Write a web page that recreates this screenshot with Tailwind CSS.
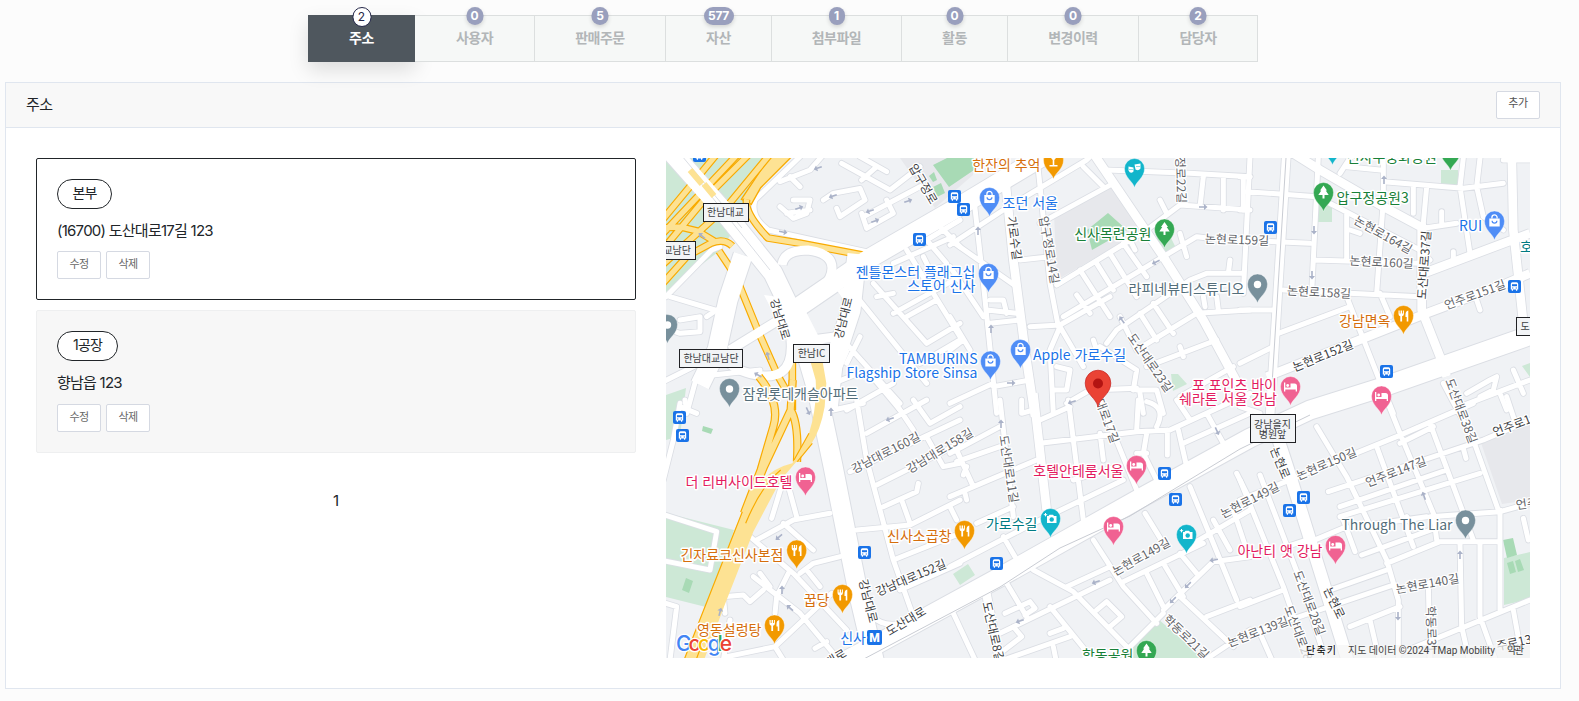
<!DOCTYPE html>
<html lang="ko">
<head>
<meta charset="utf-8">
<title>주소</title>
<script src="https://cdn.jsdelivr.net/npm/@tailwindcss/browser@4"></script>
</head>
<body class="bg-[#fcfcfc] w-[1579px] h-[701px] overflow-hidden font-[Inter,'Noto_Sans_CJK_KR',sans-serif] text-[#212529]">
<nav class="flex ml-[308px] pt-[15px] w-[950px] text-sm font-bold tracking-[-0.5px] text-[#b2b6b8] text-center leading-[46px]">
  <div class="relative w-[107px] h-[47px] bg-[#4f575e] text-white leading-[45px] shadow-[0_8px_20px_rgba(0,0,0,0.13)]">주소<span class="absolute left-1/2 -translate-x-1/2 -top-[8px] h-5 w-[19px] rounded-full bg-white border border-[#252849] text-[#252849] text-xs font-normal leading-[18px] tracking-normal">2</span></div>
  <div class="relative w-[120px] h-[47px] bg-[#f6f8f7] border-y border-r border-[#dcdfdf] leading-[43px]">사용자<span class="absolute left-1/2 -translate-x-1/2 -top-[9px] h-[18px] min-w-[17px] px-[4px] rounded-full bg-[#999fbd] text-white text-xs leading-[18px] tracking-normal shadow-[0_2px_4px_rgba(0,0,0,0.15)]">0</span></div>
  <div class="relative w-[131px] h-[47px] bg-[#f6f8f7] border-y border-r border-[#dcdfdf] leading-[43px]">판매주문<span class="absolute left-1/2 -translate-x-1/2 -top-[9px] h-[18px] min-w-[17px] px-[4px] rounded-full bg-[#999fbd] text-white text-xs leading-[18px] tracking-normal shadow-[0_2px_4px_rgba(0,0,0,0.15)]">5</span></div>
  <div class="relative w-[106px] h-[47px] bg-[#f6f8f7] border-y border-r border-[#dcdfdf] leading-[43px]">자산<span class="absolute left-1/2 -translate-x-1/2 -top-[9px] h-[18px] w-[30px] rounded-full bg-[#999fbd] text-white text-xs leading-[18px] tracking-[-0.3px] shadow-[0_2px_4px_rgba(0,0,0,0.15)]">577</span></div>
  <div class="relative w-[130px] h-[47px] bg-[#f6f8f7] border-y border-r border-[#dcdfdf] leading-[43px]">첨부파일<span class="absolute left-1/2 -translate-x-1/2 -top-[9px] h-[18px] min-w-[16px] px-[4px] rounded-full bg-[#999fbd] text-white text-xs leading-[18px] tracking-normal shadow-[0_2px_4px_rgba(0,0,0,0.15)]">1</span></div>
  <div class="relative w-[106px] h-[47px] bg-[#f6f8f7] border-y border-r border-[#dcdfdf] leading-[43px]">활동<span class="absolute left-1/2 -translate-x-1/2 -top-[9px] h-[18px] min-w-[17px] px-[4px] rounded-full bg-[#999fbd] text-white text-xs leading-[18px] tracking-normal shadow-[0_2px_4px_rgba(0,0,0,0.15)]">0</span></div>
  <div class="relative w-[131px] h-[47px] bg-[#f6f8f7] border-y border-r border-[#dcdfdf] leading-[43px]">변경이력<span class="absolute left-1/2 -translate-x-1/2 -top-[9px] h-[18px] min-w-[17px] px-[4px] rounded-full bg-[#999fbd] text-white text-xs leading-[18px] tracking-normal shadow-[0_2px_4px_rgba(0,0,0,0.15)]">0</span></div>
  <div class="relative w-[119px] h-[47px] bg-[#f6f8f7] border-y border-r border-[#dcdfdf] leading-[43px]">담당자<span class="absolute left-1/2 -translate-x-1/2 -top-[9px] h-[18px] min-w-[17px] px-[4px] rounded-full bg-[#999fbd] text-white text-xs leading-[18px] tracking-normal shadow-[0_2px_4px_rgba(0,0,0,0.15)]">2</span></div>
</nav>

<section class="mt-[20px] ml-[5px] w-[1556px] h-[607px] border border-[#e0e6ef] bg-white">
  <header class="flex items-center justify-between h-[45px] pl-[20px] pr-[20px] border-b border-[#e0e6ef] bg-[#f7f7f7]/90">
    <h1 class="text-[15px] leading-5 tracking-[-0.5px]">주소</h1>
    <button class="w-[44px] h-[28px] -mt-px rounded-[2px] border border-[#d5d9e2] bg-white text-[11px] leading-[22px] pb-1 tracking-[-0.4px] text-[#555]">추가</button>
  </header>
  <div class="flex gap-[30px] p-[30px]">
    <div class="w-[600px] flex flex-col">
      <article class="h-[142px] rounded-[2px] border border-[#212529] bg-white px-5 pt-5">
        <div class="w-[55px] h-[30px] rounded-full border border-[#212529] bg-white text-center text-sm leading-[26px] tracking-[-0.9px]">본부</div>
        <p class="mt-[11px] text-[15px] leading-[22px] tracking-[-0.75px]">(16700) 도산대로17길 123</p>
        <div class="flex gap-[5px] mt-[9px] text-[11px] leading-[24px] tracking-[-0.6px] text-[#666] text-center">
          <button class="w-[44px] h-[28px] pb-1 rounded-[2px] border border-[#d5d9e2] bg-white">수정</button><button class="w-[44px] h-[28px] pb-1 rounded-[2px] border border-[#d5d9e2] bg-white">삭제</button>
        </div>
      </article>
      <article class="mt-[10px] h-[143px] rounded-[2px] border border-[#eeeff0] bg-[#f7f7f7] px-5 pt-5">
        <div class="w-[61px] h-[30px] rounded-full border border-[#212529] bg-white text-center text-sm leading-[26px] tracking-[-0.9px]">1공장</div>
        <p class="mt-[11px] text-[15px] leading-[22px] tracking-[-0.75px]">향남읍 123</p>
        <div class="flex gap-[5px] mt-[10px] text-[11px] leading-[24px] tracking-[-0.6px] text-[#666] text-center">
          <button class="w-[44px] h-[28px] pb-1 rounded-[2px] border border-[#d5d9e2] bg-white">수정</button><button class="w-[44px] h-[28px] pb-1 rounded-[2px] border border-[#d5d9e2] bg-white">삭제</button>
        </div>
      </article>
      <div class="mt-[37px] text-center text-[15px] leading-[22px]">1</div>
    </div>

    <svg class="block w-[864px] h-[500px] shrink-0 font-['Noto_Sans_CJK_KR',sans-serif]" viewBox="666 158 864 500">
      <defs>
        <path id="pin" stroke="#fff" stroke-opacity=".6" stroke-width=".6" d="M0,0 C-1.5,-6 -10,-10 -10,-19 A10,10 0 1 1 10,-19 C10,-10 1.5,-6 0,0Z"/>
        <g id="food"><use href="#pin" fill="#f29900"/><path d="M-5,-24v3.5q0,2 1.8,2.2V-13h1.8v-5.3q1.8-.2 1.8-2.2V-24h-1v3h-.9v-3h-1.4v3h-.9v-3zM4.8,-24q-2.8.5-2.8,4v2.5h1.2V-13h1.6z" fill="#fff"/></g>
        <g id="bar"><use href="#pin" fill="#f29900"/><path d="M-5,-24H5L.8,-19v5H4v1.5H-4V-14H-.8v-5z" fill="#fff"/></g>
        <g id="shop"><use href="#pin" fill="#4f8df6"/><path d="M-5.2,-21.5H5.2V-13.5H-5.2z" fill="#fff"/><path d="M-2.6,-21.5v-1a2.6,2.6 0 0 1 5.2,0v1" fill="none" stroke="#fff" stroke-width="1.3"/><path d="M-2.4,-19.3a2.4,2.4 0 0 0 4.8,0" fill="none" stroke="#4f8df6" stroke-width="1.2"/></g>
        <g id="cam"><use href="#pin" fill="#12b5cb"/><path d="M-3.5,-21.500h1.500l1,-1.300h3.500l1,1.300h2.500v7h-9.500z" fill="#fff"/><path d="M-5,-24.500v3.400M-6.700,-22.800h3.400" stroke="#fff"/><circle cx="1.200" cy="-18" r="2.200" fill="#12b5cb"/></g>
        <g id="mask"><use href="#pin" fill="#12b5cb"/><path d="M-6,-21l5,1v4q-3,3-5,-1zM0,-23l6,-1v5q-2,3-5,1z" fill="#fff"/><path d="M-5,-18h1m1,0h1M2,-21h1m1,0h1" stroke="#12b5cb"/></g>
        <g id="tree"><use href="#pin" fill="#34a853"/><path d="M0,-26l3.5,5H2.2l3,4.5H1V-13H-1v-3.500H-5.200l3-4.500H-3.500z" fill="#fff"/></g>
        <g id="dot"><use href="#pin" fill="#78909c"/><circle cy="-18.500" r="3.700" fill="#fff"/></g>
        <g id="bed"><use href="#pin" fill="#f06292"/><path d="M-6.500,-23h1.300v5H0v-4h4q2.500,0 2.500,2.500V-14H5.200v-2H-5.200v2H-6.500z" fill="#fff"/><circle cx="-2.800" cy="-20" r="1.400" fill="#fff"/></g>
        <g id="bus"><rect x="-6.500" y="-6.500" width="13" height="13" rx="2" fill="#1a73e8"/><path d="M-3.700,-2.500q0,-1.700 1.700,-1.700h4q1.700,0 1.700,1.700V3H2.700V4.200H1.500V3H-1.500V4.200H-2.700V3H-3.700z" fill="#fff"/><path d="M-2.500,-2.300h5v2h-5z" fill="#1a73e8"/><path d="M-2.400,1.500h1.200m2.400,0h1.200" stroke="#1a73e8"/></g>
        <path id="arr" d="M0,-4.500 L3,-1 H.8 V4 H-.8 V-1 H-3z" fill="#aab2c8"/>

        <g id="minor" fill="none" stroke-linecap="round" stroke-linejoin="round">
          <g transform="translate(660 150) scale(.33333)"><path d="M420,20 L285,150 Q270,200 325,240 L370,250 L620,305 M360,95 L450,60 L485,20 M390,80 L420,110 M360,170 L400,205 L440,190 L450,150 L400,150 M380,190 L450,180 M490,150 L520,130 L600,115 L615,150 L540,200 L530,175 M545,40 L690,120 L780,50 M600,20 L680,65 M605,90 L650,50 M610,200 L780,110 M620,235 L700,190 L680,150 M605,190 L620,235 M900,210 L800,270 L860,340 M740,300 L900,560 M590,440 L800,700 M640,400 L800,580 L900,520 M700,340 L880,260 M700,490 L900,380 M650,440 L700,430 M540,560 L720,760 M780,640 L900,570 M600,560 L560,640 M830,220 L900,290 M790,320 L810,360 L850,350 M740,500 L830,450 M30,440 L165,480 M18,440 L155,300 L180,290 M30,540 L60,550 L120,545 L120,500 L60,510 M0,700 L160,620 M80,790 L110,680 L300,660 M170,480 L140,500 M520,700 L620,660 L720,780 M560,780 L700,700"/></g>
          <g transform="translate(660 400) scale(.33333)"><path d="M520,30 L610,10 M590,0 L620,180 L700,480 L760,650 M620,100 L800,0 M700,0 L760,90 M760,0 L810,70 L900,20 M570,215 L900,60 M650,255 L900,130 M670,320 L770,275 L775,250 M725,300 L750,370 M590,390 L750,375 L900,300 M700,480 L900,400 M720,570 L900,490 M800,110 L850,200 L900,190 M640,650 Q680,700 820,640 L900,620 M270,410 L400,520 L560,690 M290,420 L400,360 L510,340 M380,240 L410,350 M335,355 L370,240 M280,530 L420,640 L520,760 M195,640 L190,590 L250,585 L270,605 L310,570 M385,520 L350,590 L345,640 M420,520 L460,490 L540,470 M440,510 L480,560 M515,580 L345,740 L200,770 M345,740 L370,780 M210,660 L190,780 M465,745 L500,725 M370,370 L460,450 M300,520 L330,560 M0,340 L170,395 L150,510 L0,480 M0,605 L50,620 L30,780 M60,10 L40,120 L10,240 M60,20 L110,40 M75,0 L80,30"/></g>
          <g transform="translate(950 150) scale(.33333)"><path d="M70,130 L100,400 L140,790 M265,60 L300,400 L325,530 M0,285 L160,180 L410,30 L430,10 M270,220 L490,100 M0,270 L200,410 M210,330 L300,320 M320,405 L590,240 L690,165 L900,180 M340,500 L740,260 L780,265 M240,530 L330,525 L480,440 M470,580 L500,540 L720,390 L770,370 L880,370 M840,330 L835,370 M390,360 L480,500 M440,340 L490,420 M480,310 L560,440 M520,280 L590,380 M540,270 L555,300 M380,435 L420,490 M330,530 L400,650 M330,530 L300,600 L310,790 M450,590 L560,660 L550,720 M430,570 L440,600 M510,500 L560,600 M570,490 L620,570 M610,460 L670,550 M560,600 L740,490 L900,480 M760,440 L765,470 M800,440 L805,480 M590,650 L800,570 M690,740 L850,650 M690,590 L700,620 M560,720 L620,720 L640,790 M570,730 L580,790 M350,760 L420,720 L560,715 M690,250 L710,320 M630,150 L650,190 M110,480 L200,490 M120,520 L210,510 M120,450 L160,450 L170,490 M0,350 L100,500 M0,500 L60,600 M130,710 L240,690 M0,600 L40,570 M0,760 L130,700 M320,650 L360,660 L350,720 L310,720 M470,60 L720,70 L900,80 M760,80 L750,170 M820,80 L820,180 M880,80 L880,180 M400,50 L460,110"/></g>
          <g transform="translate(950 400) scale(.33333)"><path d="M150,0 L190,350 M355,0 L400,360 M270,130 L560,95 L660,90 L900,-20 M270,60 L360,20 M450,100 L460,180 M370,240 L500,200 M450,0 L560,270 M565,0 L560,90 M590,5 Q650,20 620,80 M652,90 L652,165 M685,90 L710,200 M590,100 L580,160 L620,240 M560,160 L590,160 M700,130 L900,40 M770,40 L820,130 M680,0 L720,60 M0,290 L260,180 M0,500 L250,370 L520,240 M0,160 L150,80 M15,140 L70,260 M20,185 L150,140 M40,225 L50,200 M50,300 L45,280 M80,370 L190,320 M0,320 L20,360 M160,410 L195,470 M215,0 L215,40 L250,30 M10,640 L80,790 M170,550 L230,650 M250,510 L370,575 L540,750 M350,560 L480,500 M430,420 L520,560 L620,670 M150,700 L480,540 M300,620 L430,780 M190,680 L215,710 L150,760 M160,780 L360,710 M520,545 L760,430 M640,640 L540,740 M640,630 L790,485 L900,470 M590,520 L640,620 M640,490 L700,590 M690,460 L740,520 M585,340 L640,430 M720,260 L860,600 M730,430 L900,330 M690,590 L850,740 M770,650 L900,600 M790,360 L840,450 M850,330 L890,450 M860,220 L900,300 M750,790 L900,690 M310,740 L320,790 M440,630 L470,605 L515,650 L480,680 M165,640 L240,605 L255,625 L225,645 M300,700 L340,685"/></g>
          <g transform="translate(1240 150) scale(.33333)"><path d="M0,80 L30,80 M0,180 L20,180 M20,125 L230,140 M30,20 L10,430 M235,20 L215,430 M250,150 L540,300 L570,330 M320,190 L320,330 M330,240 L360,250 M430,24 L430,150 L410,430 M430,95 L670,115 L790,100 M300,70 L330,24 M320,50 L420,60 M520,110 L520,190 M560,110 L550,220 M605,185 L605,220 M550,235 L650,220 M670,24 L660,110 L690,310 M720,24 L710,110 L730,200 L790,240 M790,30 L870,30 M0,270 L210,280 M220,330 L540,340 M130,420 L540,440 M0,480 L110,480 M115,550 L330,470 M320,440 L430,720 M420,430 L450,500 M640,305 L640,330 M710,450 L720,480 M680,730 L750,690 L770,680 L760,720 L720,740 M820,660 L850,730 M660,770 L870,690 M0,640 L100,590 M440,740 L460,790 M780,730 L800,780"/></g>
          <g transform="translate(1240 400) scale(.33333)"><path d="M440,0 L480,100 L580,340 L590,420 M570,70 L700,420 M570,350 L780,335 L870,310 M610,-50 L700,120 L775,330 M800,-10 L830,80 M230,80 L320,230 L440,480 L475,600 L475,790 M410,140 L520,440 M0,300 L150,240 L470,110 L700,10 M265,275 L340,250 L730,120 L870,60 M300,320 L620,210 M300,350 L720,220 M350,380 L560,350 M480,130 L580,80 M365,465 L600,380 M440,490 L600,425 L780,425 M780,330 L780,630 M660,430 L665,680 L690,790 M720,430 L720,650 L770,790 M270,570 L440,510 M0,710 L460,555 M330,680 L480,620 M390,660 L420,790 M480,760 L870,600 M820,630 L840,740 M565,550 L570,780 M0,620 L130,570 M60,225 L180,540 L260,790 M0,240 L130,560 L210,790 M200,430 L320,380 M140,440 L200,420 M670,145 L678,175 M850,355 L865,420 M310,360 L345,455 M60,700 L100,790 M500,350 L520,380 M0,20 L60,40"/></g>
        </g>
        <g id="mid" fill="none" stroke-linejoin="round">
          <g transform="translate(950 150) scale(.33333)"><path d="M165,80 L190,330 L225,600 L255,800 M430,10 L640,320 L760,510 L890,750"/></g>
          <g transform="translate(950 400) scale(.33333)"><path d="M250,-20 L290,330 M105,560 L150,790"/></g>
          <g transform="translate(1240 150) scale(.33333)"><path d="M140,0 L90,800 M160,10 L240,60 L430,170 L560,240 M550,370 L870,250 M545,220 L545,480 L600,620 L620,680 M80,680 L560,490 L800,400 L870,370 M815,0 L820,240 L850,520"/></g>
        </g>
        <g id="major" fill="none" stroke-linejoin="round">
          <path d="M780,695 L870,648 L1000,577 L1137,500 L1250,438 L1310,410 L1380,388 L1540,332"/>
          <path d="M667,147 L720,207 L773,273 L798,325 L817,390 L833,466 L845,527 L857,587 L876,668"/>
          <path d="M800,306 L870,258 L960,206 L1045,155"/>
          <path d="M857,254 L851,310 L833,365 L828,410"/>
          <path d="M743,255 L728,300 L717,350 L700,385"/>
        </g>
        <path id="nonhyeon" fill="none" d="M1272,420 L1290,475 L1350,668"/>
        <g id="loops" fill="none" stroke-linejoin="round"><path d="M730,350 L800,307 M782,265 Q784,250 808,250 Q832,253 832,268 Q832,286 800,304 M722,335 Q720,365 745,372 Q795,388 791,340 M840,295 L855,285 M812,340 L850,335"/></g>
        <g id="hwy" fill="none" stroke-linejoin="round">
          <path d="M-20,210 L170,-20 M-20,250 L235,-20 M-20,300 L130,120 L270,-20 M-20,340 L190,150 L330,-20 M-20,400 L70,300 L140,262 Q180,245 205,270 M0,215 L50,213 L100,225 L150,255 M248,130 Q240,170 312,246 L410,262 L600,298"/>
          <path d="M165,285 L205,345 M225,385 L280,520 L342,660 L365,700"/>
          <path d="M385,612 L385,762"/>
        </g>
        <g id="ramp" fill="none" stroke-linejoin="round">
          <path d="M285,-10 Q350,70 328,140 L290,270 L240,400 M386,0 L380,90 L300,260 L255,370 M380,90 Q405,130 399,245"/>
        </g>
      </defs>

      <path fill="#f0f2f5" d="M666,158h864v500H666z"/>
      <path fill="#cde8d6" d="M666,158H765L745,195L742,220L718,252L666,292zM666,395L686,388L680,436L666,440zM666,513L734,530L710,608L666,597zM953,574l15,-10 7,11 -15,10zM1115,658L1157,618L1203,658zM1504,558l26,-6v47l-26,6zM1154,238l17,0 5,10 -14,8zM1318,205h14v17h-14zM1441,170h17v15h-17zM1171,374l7,0 9,10 -14,7zM1522,366l8,-3v14z"/>
      <path fill="#e7e8ec" d="M1054,214L1113,185L1143,230L1057,280zM1480,440L1530,420V500L1502,504zM900,158h73v17L935,208z"/>
      <path fill="#a8dab5" d="M933,165L947,158H974V170L949,187zM933,187l8,-4 4,10 -8,4zM929,176l5,-4 3,8 -4,2zM1087,230L1108,213L1127,230L1092,250zM1503,540l10,-2 4,17 -10,3zM1507,563l6,-2 3,11 -6,2zM1515,561l5,-2 4,11 -6,2zM682,590l4,-12 7,3 -4,12zM703,426l10,3 -2,5 -9,-3z"/>

      <g stroke="#dbdee4"><use href="#minor" stroke-width="20"/><use href="#mid" stroke-width="31"/><use href="#loops" stroke-width="11"/><use href="#nonhyeon" stroke-width="14"/><use href="#major" stroke-width="21"/></g>
      <g stroke="#fff"><use href="#minor" stroke-width="15"/><use href="#mid" stroke-width="26"/></g>
      <g transform="translate(664 156) scale(.33333)">
        <path d="M232,130L325,-10H395L290,95L262,145z" fill="#fde293" stroke="#f9ab00" stroke-width="4"/>
        <use href="#hwy" stroke="#f9ab00" stroke-width="23"/><use href="#hwy" stroke="#fde293" stroke-width="16"/>
      </g>
      <g stroke="#fff"><use href="#loops" stroke-width="9"/><use href="#nonhyeon" stroke-width="12"/><use href="#major" stroke-width="19"/></g>
      <path fill="#fff" d="M764,295L800,300L822,343L850,350L828,400L815,372L790,345z"/>
      <g fill="none" stroke="#dbdee4"><path d="M677,150L742,228M700,182L770,270"/></g>
      <path d="M690,170l12,14M704,184l10,12" stroke="#fde293" stroke-width="6"/>

      <g transform="translate(664 380) scale(.33333)">
        <use href="#ramp" stroke="#f9ab00" stroke-width="25"/>
        <path d="M60,840 L200,480 L250,360 Q300,270 385,250 L435,160 Q460,80 455,0 L438,-60 L475,-60 L487,10 L482,80 Q470,150 440,195 L350,300 L268,455 L180,680 L120,840Z" fill="#fde293"/>
        <use href="#ramp" stroke="#fde293" stroke-width="18"/>
        <path d="M60,840 L235,395 M445,190 L400,245 M390,240 L435,160 M350,270 Q290,320 245,430 M96,840 L130,750" fill="none" stroke="#f9ab00" stroke-width="3.500"/>
      </g>
      <path d="M860,661L1000,587L1060,548L1130,516L1240,449L1310,415M1286,158L1272,385" fill="none" stroke="#c9ccd3"/>

      <g>
        <use href="#arr" transform="translate(818 168) rotate(-110)"/><use href="#arr" transform="translate(833 196) rotate(-110)"/><use href="#arr" transform="translate(799 208) rotate(70)"/><use href="#arr" transform="translate(870 211) rotate(-110)"/><use href="#arr" transform="translate(875 221) rotate(70)"/><use href="#arr" transform="translate(908 201) rotate(70)"/><use href="#arr" transform="translate(783 232) rotate(100)"/><use href="#arr" transform="translate(702 236) rotate(-50)"/><use href="#arr" transform="translate(768 356) rotate(-15)"/><use href="#arr" transform="translate(758 375) rotate(-60)"/>
        <use href="#arr" transform="translate(808 411) rotate(155)"/><use href="#arr" transform="translate(831 412)"/><use href="#arr" transform="translate(890 419) rotate(-110)"/><use href="#arr" transform="translate(779 537) rotate(-130)"/><use href="#arr" transform="translate(782 590)"/><use href="#arr" transform="translate(790 608) rotate(-50)"/><use href="#arr" transform="translate(720 612) rotate(15)"/>
        <use href="#arr" transform="translate(978 231)"/><use href="#arr" transform="translate(991 329)"/><use href="#arr" transform="translate(1011 383) rotate(90)"/><use href="#arr" transform="translate(1072 402) rotate(-110)"/><use href="#arr" transform="translate(1122 320) rotate(-35)"/><use href="#arr" transform="translate(1156 262) rotate(-115)"/><use href="#arr" transform="translate(1203 207) rotate(90)"/><use href="#arr" transform="translate(1001 424)"/><use href="#arr" transform="translate(1217 431) rotate(155)"/><use href="#arr" transform="translate(1096 582) rotate(-110)"/><use href="#arr" transform="translate(1020 621) rotate(-110)"/><use href="#arr" transform="translate(1173 600) rotate(-135)"/><use href="#arr" transform="translate(1188 585) rotate(-135)"/><use href="#arr" transform="translate(1214 560) rotate(-100)"/>
        <use href="#arr" transform="translate(1384 180)"/><use href="#arr" transform="translate(1314 230) rotate(180)"/><use href="#arr" transform="translate(1312 275) rotate(180)"/><use href="#arr" transform="translate(1424 496) rotate(-20)"/><use href="#arr" transform="translate(1460 555)"/><use href="#arr" transform="translate(1398 616) rotate(180)"/>
      </g>

      <g class="text-[12px]" text-anchor="middle" fill="#5f6368" stroke="#fff" stroke-width="2.500" paint-order="stroke" stroke-linejoin="round">
        <g fill="#3c4043">
        <text transform="translate(780 319) rotate(73)" y="4" class="text-[11.500px]">강남대로</text>
        <text transform="translate(843.500 318) rotate(-76)" y="4" class="text-[11.500px]">강남대로</text>
        <text transform="translate(923 184) rotate(60)" y="4">압구정로</text>
        <text transform="translate(1014 238) rotate(82)" y="4">가로수길</text>
        <text transform="translate(911 578) rotate(-23)" y="4">강남대로152길</text>
        <text transform="translate(868 601) rotate(76)" y="4">강남대로</text>
        <text transform="translate(906 621.500) rotate(-31)" y="4">도산대로</text>
        <text transform="translate(836 658) rotate(-31)" y="4">대로</text>
        <text transform="translate(993 632) rotate(77)" y="4">도산대로8길</text>
        <text transform="translate(1280 463) rotate(68)" y="4">논현로</text>
        <text transform="translate(1334 603) rotate(64)" y="4">논현로</text>
        <text transform="translate(1323 356) rotate(-22)" y="4">논현로152길</text>
        <text transform="translate(1424.500 265) rotate(-86)" y="4">도산대로37길</text>
        <text transform="translate(1512 426) rotate(-21)" y="4">언주로1</text>
        <text transform="translate(1514 643) rotate(-12)" y="4">주로13</text>
        </g>
        <text transform="translate(1049 250) rotate(80)" y="4">압구정로14길</text>
        <text transform="translate(1180.500 180) rotate(88)" y="4">정로22길</text>
        <text transform="translate(1237 240) rotate(2)" y="4">논현로159길</text>
        <text transform="translate(1150 363) rotate(55)" y="4">도산대로23길</text>
        <text transform="translate(1107 421) rotate(70)" y="4">대로17길</text>
        <text transform="translate(886 453) rotate(-27)" y="4">강남대로160길</text>
        <text transform="translate(940 451) rotate(-31)" y="4">강남대로158길</text>
        <text transform="translate(1008.500 469) rotate(81)" y="4">도산대로11길</text>
        <text transform="translate(1141.500 557) rotate(-29)" y="4">논현로149길</text>
        <text transform="translate(1186 637) rotate(44)" y="4">학동로21길</text>
        <text transform="translate(1250 500.500) rotate(-27)" y="4">논현로149길</text>
        <text transform="translate(1258 632) rotate(-21)" y="4">논현로139길</text>
        <text transform="translate(1326.500 464) rotate(-23)" y="4">논현로150길</text>
        <text transform="translate(1396 472) rotate(-21)" y="4">언주로147길</text>
        <text transform="translate(1427.500 584) rotate(-10)" y="4">논현로140길</text>
        <text transform="translate(1309 603) rotate(69)" y="4">도산대로28길</text>
        <text transform="translate(1300 638) rotate(69)" y="4">도산대로28길</text>
        <text transform="translate(1431 629) rotate(88)" y="4">학동로31</text>
        <text transform="translate(1461 411) rotate(69)" y="4">도산대로38길</text>
        <text transform="translate(1527 504) rotate(-8)" y="4">언주</text>
        <text transform="translate(1383 235) rotate(29)" y="4">논현로164길</text>
        <text transform="translate(1381.500 262.500) rotate(3)" y="4">논현로160길</text>
        <text transform="translate(1319 292.500) rotate(3)" y="4">논현로158길</text>
        <text transform="translate(1475 295) rotate(-20)" y="4">언주로151길</text>
      </g>

      <g>
        <use href="#bus" x="699.500" y="155.500"/><use href="#bus" x="954.500" y="196.500"/><use href="#bus" x="963.500" y="209.500"/><use href="#bus" x="919.500" y="239.500"/><use href="#bus" x="679.500" y="417.500"/><use href="#bus" x="682.500" y="435.500"/><use href="#bus" x="864.500" y="552.500"/><use href="#bus" x="1164.500" y="473.500"/><use href="#bus" x="1175.500" y="499.500"/><use href="#bus" x="996.500" y="563.500"/><use href="#bus" x="1270.500" y="227.500"/><use href="#bus" x="1514.500" y="286.500"/><use href="#bus" x="1386.500" y="371.500"/><use href="#bus" x="1303.500" y="497.500"/><use href="#bus" x="1289.500" y="510.500"/>
        <rect x="867" y="630" width="15" height="15" rx="2" fill="#1a73e8"/><text x="874.500" y="642" text-anchor="middle" fill="#fff" class="text-[12px] font-black font-[Roboto]">M</text>
      </g>

      <g>
        <use href="#bar" x="1053.500" y="179"/><use href="#food" x="1403.500" y="334.500"/><use href="#food" x="964.500" y="549.500"/><use href="#food" x="796.700" y="569"/><use href="#food" x="842.500" y="613.500"/><use href="#food" x="774.500" y="644"/>
        <use href="#shop" x="989.500" y="216.500"/><use href="#shop" x="988.500" y="292.500"/><use href="#shop" x="990.500" y="380"/><use href="#shop" x="1020.500" y="368.500"/><use href="#shop" x="1494.500" y="240"/>
        <use href="#mask" x="1134.500" y="187.500"/><use href="#mask" x="1332.500" y="165"/><use href="#cam" x="1050.500" y="537.500"/><use href="#cam" x="1186.500" y="553.500"/>
        <use href="#tree" x="1164.500" y="248"/><use href="#tree" x="1323.500" y="211.500"/><use href="#tree" x="1450.500" y="170.500"/><use href="#tree" x="1146.500" y="669.500"/>
        <use href="#dot" x="729.500" y="407.500"/><use href="#dot" x="667.500" y="343.500"/><use href="#dot" x="1257.500" y="303"/><use href="#dot" x="1465.500" y="539"/>
        <use href="#bed" x="805.500" y="496"/><use href="#bed" x="1136.500" y="484.500"/><use href="#bed" x="1113.500" y="545.500"/><use href="#bed" x="1290.500" y="405.500"/><use href="#bed" x="1381.500" y="415"/><use href="#bed" x="1335.500" y="564.500"/>
      </g>

      <g class="text-[14px]" stroke="#fff" stroke-width="3" paint-order="stroke" stroke-linejoin="round">
        <g fill="#d56e0c" text-anchor="end"><text x="1040.500" y="169.500">한잔의 추억</text><text x="1390.500" y="325.500">강남면옥</text><text x="951.500" y="540.500">신사소곱창</text><text x="783.500" y="559.500">긴자료코신사본점</text><text x="829.500" y="604.500">꿉당</text><text x="761.500" y="634.500">영동설렁탕</text></g>
        <g fill="#1a73e8"><text x="1002.500" y="207.500">조던 서울</text><text x="975.500" y="276.500" text-anchor="end">젠틀몬스터 플래그십</text><text x="975.500" y="290.500" text-anchor="end">스토어 신사</text><text x="977.500" y="364" text-anchor="end">TAMBURINS</text><text x="977.500" y="378" text-anchor="end" textLength="131">Flagship Store Sinsa</text><text x="1033" y="360">Apple 가로수길</text><text x="1482" y="231" text-anchor="end">RUI</text><text x="866" y="643" text-anchor="end">신사</text></g>
        <g fill="#188038"><text x="1151.500" y="239" text-anchor="end">신사목련공원</text><text x="1336.500" y="203">압구정공원3</text><text x="1437" y="162" text-anchor="end">신사무궁화공원</text><text x="1133.500" y="660" text-anchor="end">학동공원</text></g>
        <g fill="#007b83"><text x="1037.500" y="529" text-anchor="end">가로수길</text><text x="1520" y="252">호텔</text></g>
        <g fill="#546e7a"><text x="742.500" y="399">잠원롯데캐슬아파트</text><text x="1244.500" y="294" text-anchor="end">라피네뷰티스튜디오</text><text x="1452.500" y="530" text-anchor="end" textLength="111">Through The Liar</text></g>
        <g fill="#e31b60" text-anchor="end"><text x="792.500" y="487">더 리버사이드호텔</text><text x="1123.500" y="476">호텔안테룸서울</text><text x="1277" y="389.500">포 포인츠 바이</text><text x="1277" y="403.500">쉐라톤 서울 강남</text><text x="1322.500" y="556">아난티 앳 강남</text></g>
      </g>

      <g fill="#f2f4f6" stroke="#202124">
        <rect x="703.500" y="203.500" width="45" height="18"/><rect x="650.500" y="241.500" width="45" height="18"/><rect x="679.500" y="349.500" width="63" height="18"/><rect x="793.500" y="344.500" width="36" height="18"/><rect x="1250.500" y="414.500" width="45" height="28"/><rect x="1516.500" y="317.500" width="30" height="18"/>
      </g>
      <g class="text-[10px]" fill="#3c4043" text-anchor="middle">
        <text x="725.500" y="216">한남대교</text><text x="691" y="254" text-anchor="end">교남단</text><text x="711" y="362">한남대교남단</text><text x="811.500" y="357">한남IC</text><text x="1272.500" y="427.500">강남을지</text><text x="1272.500" y="437.500">병원앞</text><text x="1520.500" y="330" text-anchor="start">도산</text>
      </g>

      <g transform="translate(1098 407)"><path d="M0,0 C-1.500,-9 -12.800,-13 -12.800,-24 A12.800,12.800 0 0 1 12.800,-24 C12.800,-13 1.500,-9 0,0Z" fill="#ea4335" stroke="#c5221f" stroke-width=".7"/><circle cy="-23.500" r="5" fill="#b31412"/></g>

      <text x="676" y="651" textLength="56" class="text-[21px] font-medium font-[Inter]" stroke="#fff" stroke-width="2.500" paint-order="stroke"><tspan fill="#4285f4">G</tspan><tspan fill="#ea4335">o</tspan><tspan fill="#fbbc04">o</tspan><tspan fill="#4285f4">g</tspan><tspan fill="#34a853">l</tspan><tspan fill="#ea4335">e</tspan></text>
      <path d="M1300,645h230v13h-230z" fill="#f5f5f5" fill-opacity=".72"/>
      <g class="text-[10px] font-[Roboto,'Noto_Sans_CJK_KR']" fill="#444"><text x="1306" y="654" fill="#000" textLength="30">단축키</text><text x="1348" y="654" textLength="147">지도 데이터 ©2024 TMap Mobility</text><text x="1507" y="654" textLength="17">약관</text></g>
    </svg>
  </div>
</section>
</body>
</html>
